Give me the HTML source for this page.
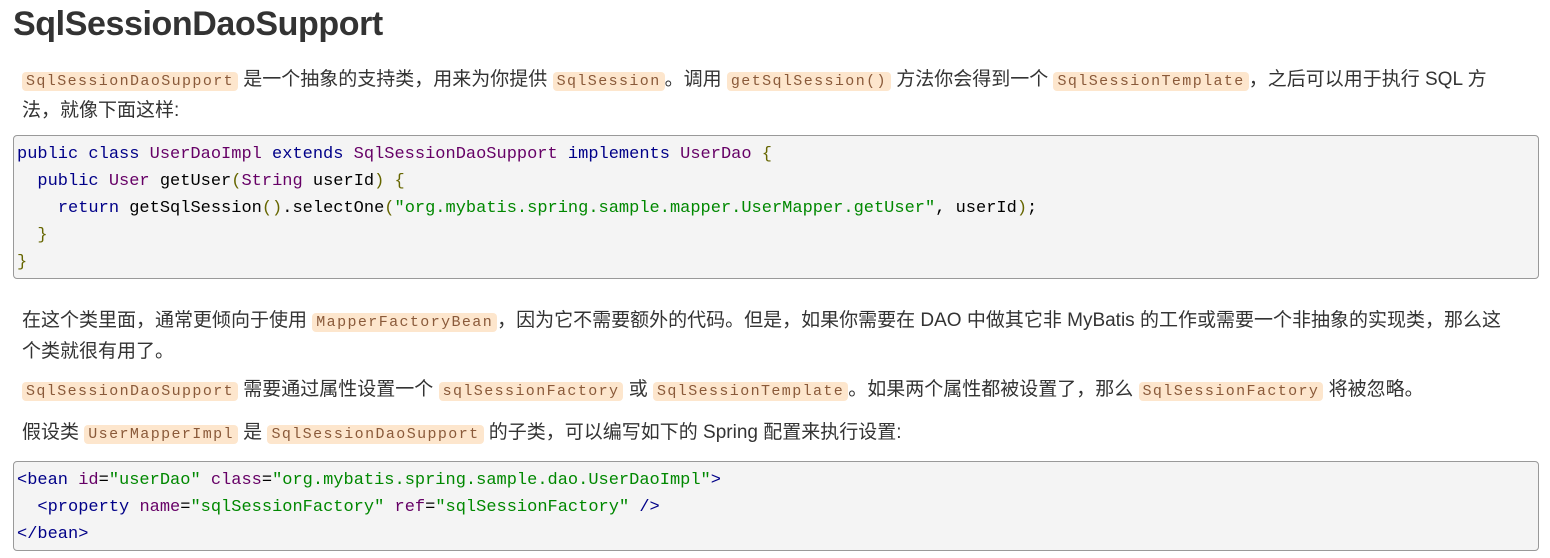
<!DOCTYPE html>
<html><head><meta charset="utf-8"><style>
body{margin:0;background:#fff;width:1550px;height:558px;overflow:hidden;font-family:"Liberation Sans","Noto Sans CJK SC",sans-serif;color:#333;}
h1{position:absolute;left:13px;top:4px;margin:0;font-size:34px;line-height:40px;font-weight:bold;color:#333;letter-spacing:-0.4px}
p{position:absolute;left:22px;margin:0;font-size:19px;line-height:29px;width:1490px;}
code{font-family:"Liberation Mono",monospace;font-size:15px;letter-spacing:1.4px;background:#fde6cd;color:#8a5a3a;padding:1px 4px;border-radius:4px;}
pre{position:absolute;left:13px;width:1521px;margin:0;background:#f4f4f4;border:1px solid #999;border-radius:4px;padding:5px 0 0 3px;font-family:"Liberation Mono",monospace;font-size:17px;letter-spacing:0;line-height:27px;color:#000;}
.k{color:#000088}.t{color:#660066}.s{color:#008800}.o{color:#666600}
</style></head><body>
<h1>SqlSessionDaoSupport</h1>
<p style="top:65px"><code>SqlSessionDaoSupport</code> 是一个抽象的支持类，用来为你提供 <code>SqlSession</code>。调用 <code>getSqlSession()</code> 方法你会得到一个 <code>SqlSessionTemplate</code>，之后可以用于执行 SQL 方法，就像下面这样:</p>
<pre style="top:135px;height:137px"><span class="k">public class</span> <span class="t">UserDaoImpl</span> <span class="k">extends</span> <span class="t">SqlSessionDaoSupport</span> <span class="k">implements</span> <span class="t">UserDao</span> <span class="o">{</span>
  <span class="k">public</span> <span class="t">User</span> getUser<span class="o">(</span><span class="t">String</span> userId<span class="o">)</span> <span class="o">{</span>
    <span class="k">return</span> getSqlSession<span class="o">()</span>.selectOne<span class="o">(</span><span class="s">"org.mybatis.spring.sample.mapper.UserMapper.getUser"</span>, userId<span class="o">)</span>;
  <span class="o">}</span>
<span class="o">}</span></pre>
<p style="top:306px">在这个类里面，通常更倾向于使用 <code>MapperFactoryBean</code>，因为它不需要额外的代码。但是，如果你需要在 DAO 中做其它非 MyBatis 的工作或需要一个非抽象的实现类，那么这个类就很有用了。</p>
<p style="top:375px"><code>SqlSessionDaoSupport</code> 需要通过属性设置一个 <code>sqlSessionFactory</code> 或 <code>SqlSessionTemplate</code>。如果两个属性都被设置了，那么 <code>SqlSessionFactory</code> 将被忽略。</p>
<p style="top:418px">假设类 <code>UserMapperImpl</code> 是 <code>SqlSessionDaoSupport</code> 的子类，可以编写如下的 Spring 配置来执行设置:</p>
<pre style="top:461px;height:83px"><span class="k">&lt;bean</span> <span class="t">id</span>=<span class="s">"userDao"</span> <span class="t">class</span>=<span class="s">"org.mybatis.spring.sample.dao.UserDaoImpl"</span><span class="k">&gt;</span>
  <span class="k">&lt;property</span> <span class="t">name</span>=<span class="s">"sqlSessionFactory"</span> <span class="t">ref</span>=<span class="s">"sqlSessionFactory"</span> <span class="k">/&gt;</span>
<span class="k">&lt;/bean&gt;</span></pre>
</body></html>
